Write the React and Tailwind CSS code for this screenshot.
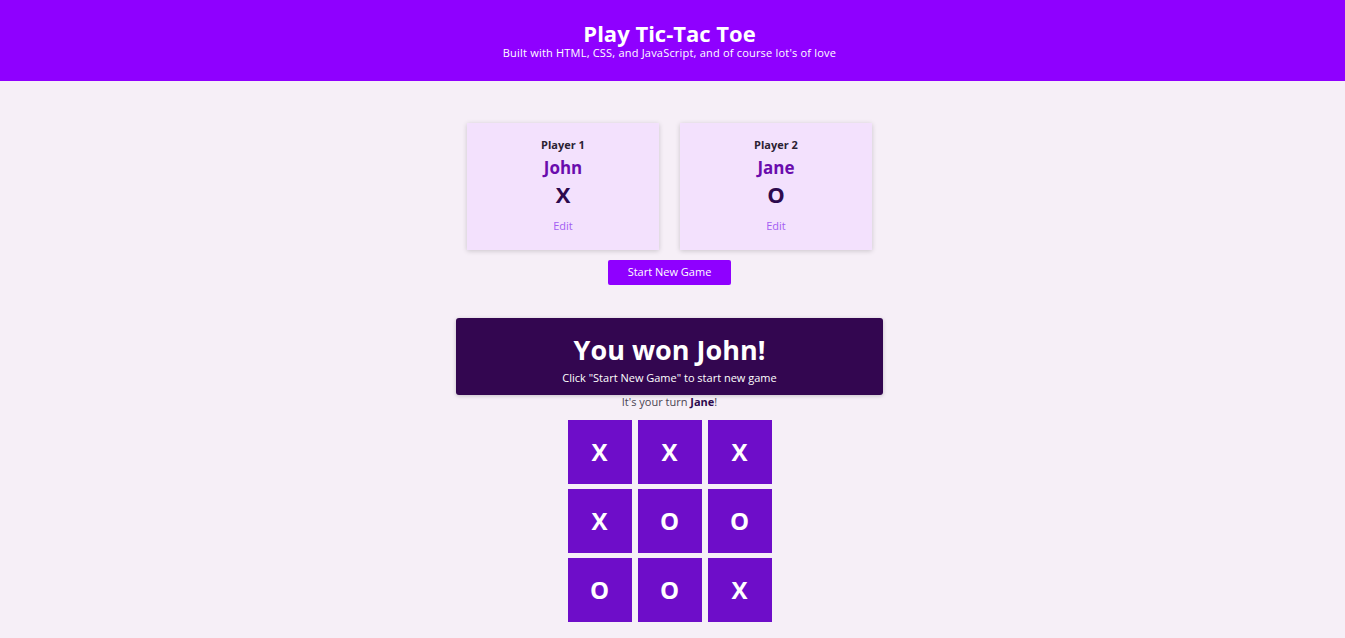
const font = { fontFamily: '"Open Sans", "DejaVu Sans", sans-serif' };

const players = [
  { label: "Player 1", name: "John", symbol: "X" },
  { label: "Player 2", name: "Jane", symbol: "O" },
];

const board = ["X", "X", "X", "X", "O", "O", "O", "O", "X"];

function PlayerCard({ player }) {
  return (
    <div className="w-[192px] h-[127px] bg-[#f3e1fd] shadow-[0_1px_5px_rgba(0,0,0,0.18)] flex flex-col items-center pt-[15px]">
      <p className="text-[11px] font-bold text-[#2b2233] leading-[14px]">{player.label}</p>
      <p className="text-[17px] font-bold text-[#6a0cad] leading-[22px] mt-[5px]">{player.name}</p>
      <p className="text-[22px] font-bold text-[#2d0a4e] leading-[28px] mt-[1px]">{player.symbol}</p>
      <button className="text-[11px] text-[#a35ef2] leading-[14px] mt-[11px]">Edit</button>
    </div>
  );
}

export default function App() {
  return (
    <div className="min-h-[638px] bg-[#f6eff7]" style={font}>
      <header className="h-[81px] bg-[#8f00ff] flex flex-col items-center pt-[21px] pr-[6px] text-white">
        <h1 className="text-[22px] font-bold leading-[24px]">Play Tic-Tac Toe</h1>
        <p className="text-[11px] leading-[14px] tracking-[0.2px] mt-[1px]">Built with HTML, CSS, and JavaScript, and of course lot's of love</p>
      </header>

      <main className="flex flex-col items-center pt-[42px] pr-[6px]">
        {/* Players */}
        <div className="flex gap-[21px]">
          {players.map((p) => (
            <PlayerCard key={p.label} player={p} />
          ))}
        </div>

        <button className="mt-[10px] w-[123px] h-[25px] bg-[#8f00ff] text-white text-[11px] rounded-[2px]">
          Start New Game
        </button>

        {/* Winner */}
        <div className="mt-[33px] w-[427px] h-[77px] bg-[#330650] rounded-[3px] shadow-[0_1px_4px_rgba(0,0,0,0.2)] flex flex-col items-center pt-[15px] text-white">
          <h2 className="text-[27px] font-bold leading-[34px]">You won John!</h2>
          <p className="text-[11px] leading-[14px] mt-[4px]">Click "Start New Game" to start new game</p>
        </div>

        <p className="text-[11px] text-[#4a4452] leading-[14px]">
          It's your turn <span className="font-bold text-[#2d0a4e]">Jane</span>!
        </p>

        {/* Board */}
        <div className="grid grid-cols-[64px_64px_64px] gap-x-[6px] gap-y-[5px] mt-[11px] mb-[16px]">
          {board.map((v, i) => (
            <button
              key={i}
              className="w-[64px] h-[64px] bg-[#6e0dc9] text-white text-[24px] font-bold flex items-center justify-center"
            >
              {v}
            </button>
          ))}
        </div>
      </main>
    </div>
  );
}
